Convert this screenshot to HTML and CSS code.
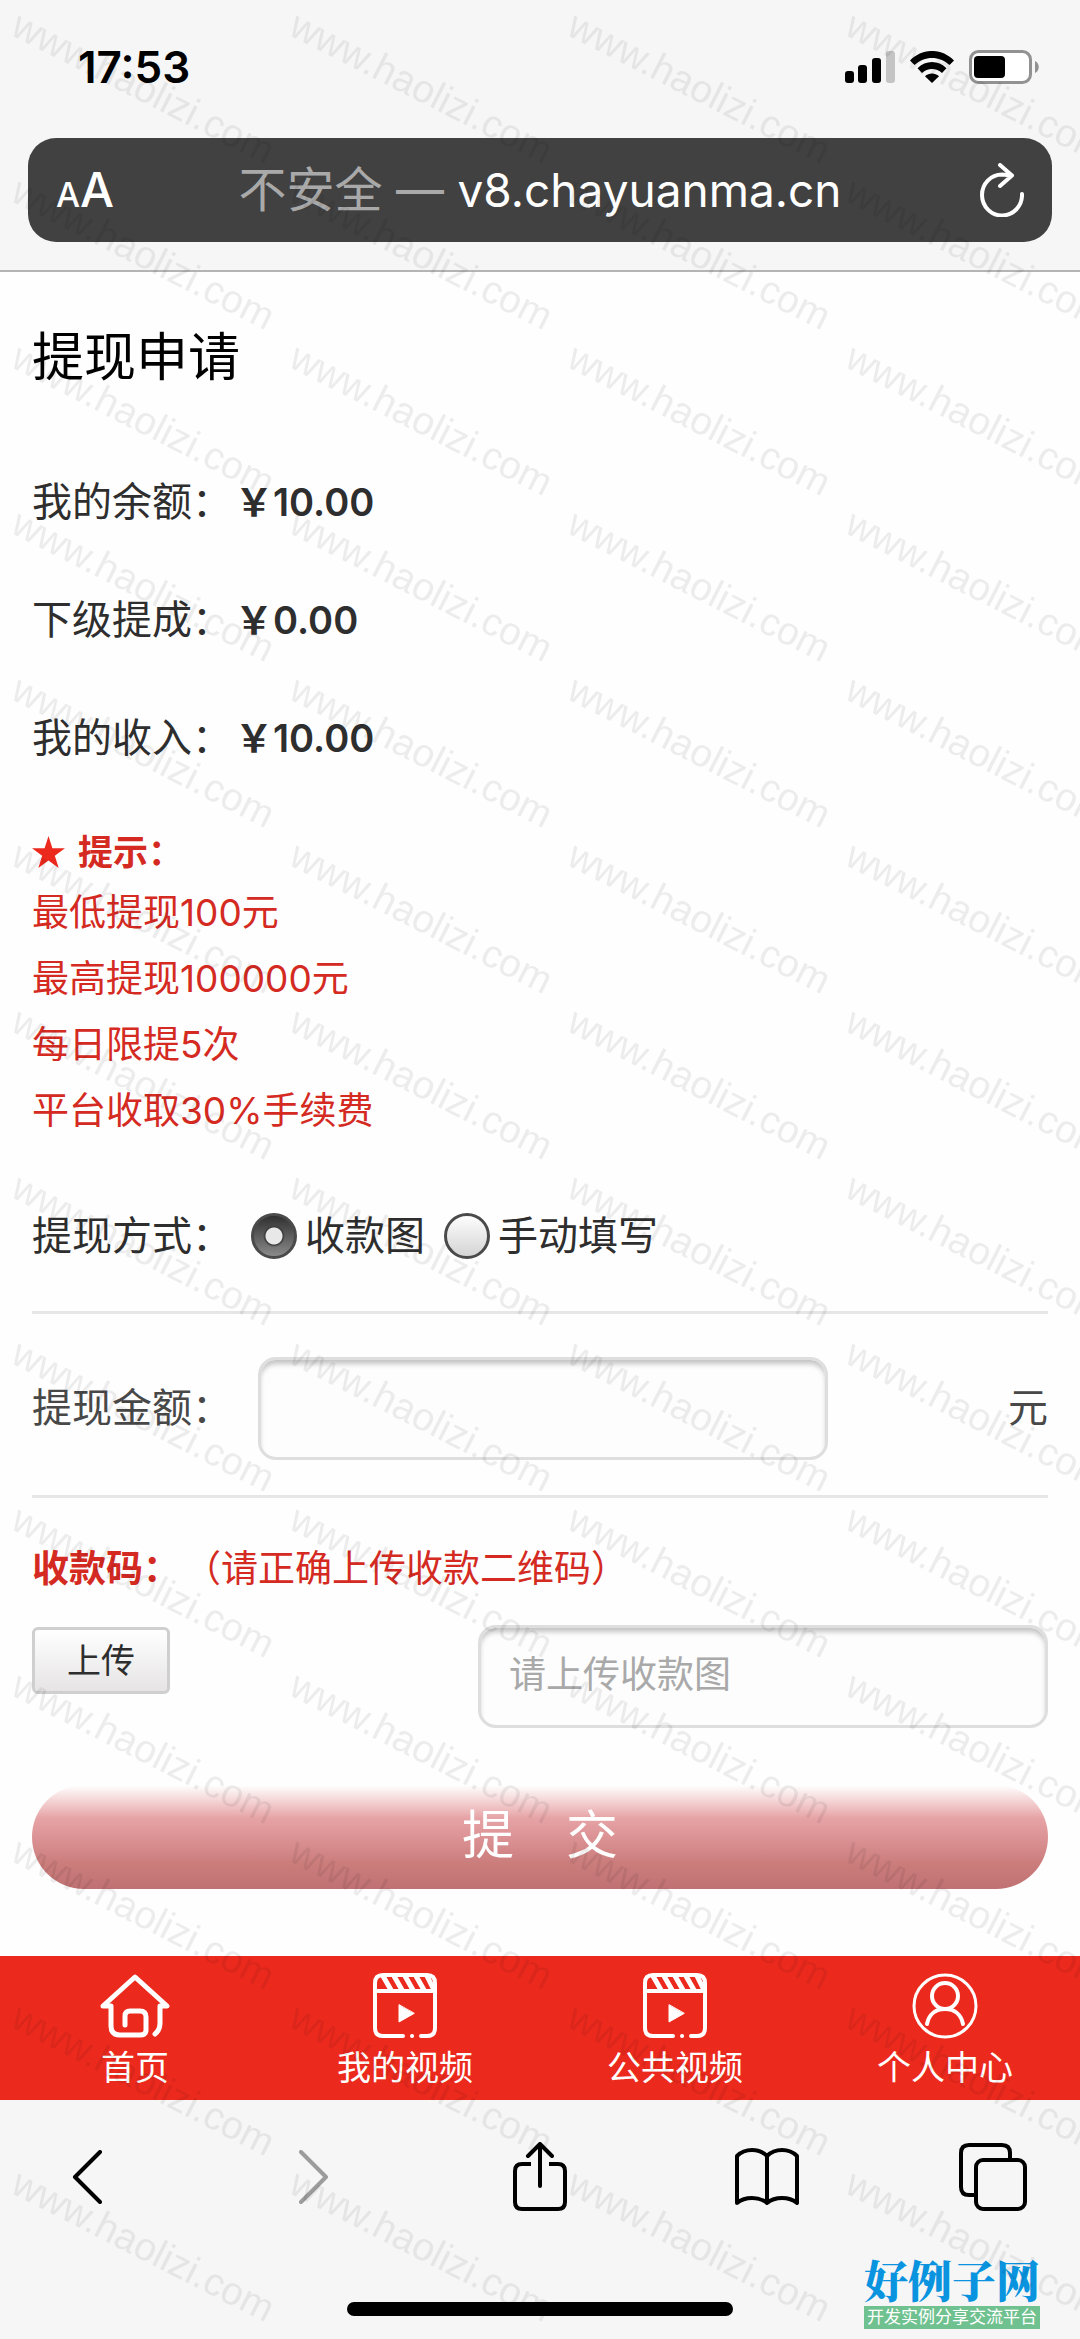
FILE: index.html
```html
<!DOCTYPE html>
<html lang="zh-CN">
<head>
<meta charset="utf-8">
<meta name="viewport" content="width=device-width, initial-scale=1">
<title>提现申请</title>
<link rel="stylesheet" href="styles.css">
</head>
<body>
<header class="browser-top">
  <div class="status">
    <time class="clock">17:53</time>
    <div class="status-icons">
      <svg width="50" height="32" viewBox="0 0 50 32" aria-hidden="true">
        <rect x="0" y="20" width="9" height="12" rx="3"/>
        <rect x="13" y="14" width="9" height="18" rx="3"/>
        <rect x="27" y="7" width="9" height="25" rx="3"/>
        <rect x="41" y="0" width="9" height="32" rx="3" fill="#c4c4c4"/>
      </svg>
      <svg width="44" height="32" viewBox="0 0 44 32" aria-hidden="true">
        <path d="M0 9.500C12.500-3.200 31.500-3.200 44 9.500L39.500 14C29.500 4.500 14.500 4.500 4.500 14Z"/>
        <path d="M7.500 17.200C15.500 9 28.500 9 36.500 17.200L32 22C26.500 16.500 17.500 16.500 12 22Z"/>
        <path d="M15 25.200C19 21.500 25 21.500 29 25.200L22 32Z"/>
      </svg>
      <svg width="70" height="34" viewBox="0 0 70 34" aria-hidden="true">
        <rect x="1.500" y="1.500" width="60" height="31" rx="8" fill="#fff" stroke="#929292" stroke-width="3"/>
        <rect x="5" y="6" width="31" height="22" rx="4"/>
        <path d="M66 11C71 13 71 21 66 23Z" fill="#929292"/>
      </svg>
    </div>
  </div>
  <div class="address">
    <button class="text-size" aria-label="文字大小"><span class="small-a">A</span><span>A</span></button>
    <p class="url"><span class="insecure">不安全 — </span><span class="host">v8.chayuanma.cn</span></p>
    <button class="reload" aria-label="重新加载">
      <svg width="44" height="54" viewBox="0 0 44 54" fill="none" stroke="#fff" stroke-width="4" stroke-linecap="round" stroke-linejoin="round" aria-hidden="true">
        <path d="M42 31A20 20.500 0 1 1 22 11.500L32 12.500M20 2L32 12.500L20 23"/>
      </svg>
    </button>
  </div>
</header>

<main class="page">
  <h1 class="title">提现申请</h1>
  <dl class="balances">
    <div class="balance"><dt>我的余额：</dt><dd>￥10.00</dd></div>
    <div class="balance"><dt>下级提成：</dt><dd>￥0.00</dd></div>
    <div class="balance"><dt>我的收入：</dt><dd>￥10.00</dd></div>
  </dl>

  <section class="tips">
    <h2 class="tips-title">
      <svg width="33" height="32" viewBox="0 0 33 32" fill="#ec291d" aria-hidden="true"><path d="M16.500 0L20.400 12.200H33L22.800 19.700L26.700 32L16.500 24.400L6.300 32L10.200 19.700L0 12.200H12.600Z"/></svg>
      提示：
    </h2>
    <ul class="tips-list">
      <li>最低提现100元</li>
      <li>最高提现100000元</li>
      <li>每日限提5次</li>
      <li>平台收取30%手续费</li>
    </ul>
  </section>

  <form class="form">
    <div class="field method" role="radiogroup" aria-labelledby="method-label">
      <span class="label" id="method-label">提现方式：</span>
      <label class="choice"><input class="radio" type="radio" name="method" checked>收款图</label>
      <label class="choice"><input class="radio" type="radio" name="method">手动填写</label>
    </div>
    <div class="field amount">
      <label class="label" for="amount">提现金额：</label>
      <input class="text-input" id="amount" type="text" inputmode="decimal">
      <span class="unit">元</span>
    </div>
    <p class="code-note"><label for="code"><strong class="code-name">收款码：</strong>（请正确上传收款二维码）</label></p>
    <div class="upload-row">
      <button class="upload" type="button">上传</button>
      <input class="text-input" id="code" type="text" placeholder="请上传收款图">
    </div>
    <button class="submit" type="submit">提　交</button>
  </form>
</main>

<nav class="tabs">
  <a class="tab" href="#home">
    <svg width="72" height="66" viewBox="0 0 72 66" fill="none" stroke="#fff" stroke-width="5" stroke-linecap="round" stroke-linejoin="round" aria-hidden="true">
      <path d="M26 52V43Q26 38 31 38H41Q47 38 47 44V57Q47 62 41 62H21Q12 62 12 53V33L4 33L36 4L68 33L61 33V50Q61 57 56 61"/>
    </svg>
    首页
  </a>
  <a class="tab" href="#mine">
    <svg width="64" height="66" viewBox="0 0 64 66" fill="none" stroke="#fff" stroke-width="4" stroke-linecap="round" aria-hidden="true">
      <path d="M30 63H10Q2 63 2 55V10Q2 2 10 2H54Q62 2 62 10V55Q62 63 54 63H48M39 63H39.100M2 18H62"/>
      <path d="M10 3L18 17M21 3L29 17M32 3L40 17M43 3L51 17M54 3L60 15" stroke-width="5"/>
      <path d="M26 32V49L41 40.500Z" fill="#fff" stroke-width="1"/>
    </svg>
    我的视频
  </a>
  <a class="tab" href="#public">
    <svg width="64" height="66" viewBox="0 0 64 66" fill="none" stroke="#fff" stroke-width="4" stroke-linecap="round" aria-hidden="true">
      <path d="M30 63H10Q2 63 2 55V10Q2 2 10 2H54Q62 2 62 10V55Q62 63 54 63H48M39 63H39.100M2 18H62"/>
      <path d="M10 3L18 17M21 3L29 17M32 3L40 17M43 3L51 17M54 3L60 15" stroke-width="5"/>
      <path d="M26 32V49L41 40.500Z" fill="#fff" stroke-width="1"/>
    </svg>
    公共视频
  </a>
  <a class="tab" href="#me">
    <svg width="66" height="66" viewBox="0 0 66 66" fill="none" stroke="#fff" stroke-width="3" stroke-linecap="round" aria-hidden="true">
      <circle cx="33" cy="33" r="31"/>
      <circle cx="33" cy="23" r="13" stroke-width="4"/>
      <path d="M15 51C17 41 24 36 33 36S49 41 51 51" stroke-width="4"/>
    </svg>
    个人中心
  </a>
</nav>

<footer class="browser-bottom">
  <div class="toolbar">
    <button class="tool" aria-label="后退"><svg width="30" height="54" viewBox="0 0 30 54" fill="none" stroke="#000" stroke-width="4" stroke-linecap="round" stroke-linejoin="round"><path d="M28 2L3 27L28 52"/></svg></button>
    <button class="tool" aria-label="前进"><svg width="30" height="54" viewBox="0 0 30 54" fill="none" stroke="#9c9c9c" stroke-width="4" stroke-linecap="round" stroke-linejoin="round"><path d="M2 2L27 27L2 52"/></svg></button>
    <button class="tool" aria-label="分享"><svg width="54" height="70" viewBox="0 0 54 70" fill="none" stroke="#000" stroke-width="4" stroke-linejoin="round"><path d="M18 22H9Q2 22 2 29V60Q2 67 9 67H45Q52 67 52 60V29Q52 22 45 22H36"/><path d="M27 44V2M15 14L27 2L39 14" stroke-linecap="round"/></svg></button>
    <button class="tool" aria-label="书签"><svg width="64" height="58" viewBox="0 0 64 58" fill="none" stroke="#000" stroke-width="4" stroke-linecap="round" stroke-linejoin="round"><path d="M32 8V55M32 8Q26 2 17 2T2 8V55Q8 50 17 50T32 55Q38 50 47 50T62 55V8Q56 2 47 2T32 8"/></svg></button>
    <button class="tool" aria-label="标签页"><svg width="68" height="68" viewBox="0 0 68 68" fill="none" stroke="#000" stroke-width="4"><path d="M16 52H10Q2 52 2 44V10Q2 2 10 2H43Q51 2 51 10V16"/><rect x="17" y="17" width="49" height="49" rx="7"/></svg></button>
  </div>
  <div class="home-bar"></div>
  <div class="brand">
    <strong class="brand-name">好例子网</strong>
    <span class="brand-line">开发实例分享交流平台</span>
  </div>
</footer>

<svg class="watermark" aria-hidden="true">
  <defs>
    <pattern id="mark" width="278" height="166" patternUnits="userSpaceOnUse">
      <text class="watermark-text" transform="translate(9 34) rotate(27)">www.haolizi.com</text>
    </pattern>
  </defs>
  <rect width="100%" height="100%" fill="url(#mark)"/>
</svg>
</body>
</html>
```
FILE: styles.css
```css
*, *::before, *::after { box-sizing: border-box; }

body {
  position: relative;
  margin: 0;
  background: #fefefe;
  color: #2e2e2e;
  font-family: Inter, "Noto Sans CJK SC", sans-serif;
  font-size: 40px;
  line-height: 60px;
  text-spacing-trim: space-all;
}

button, input { font: inherit; color: inherit; }
button { padding: 0; border: 0; background: none; cursor: pointer; }
svg { display: block; flex: none; }
h1, h2, p, dl, dd, ul { margin: 0; padding: 0; }

/* Browser header */
.browser-top {
  display: flex;
  flex-direction: column;
  padding: 0 28px 28px;
  background: #f6f6f6;
  border-bottom: 2px solid #b4b4b4;
}
.status {
  display: flex;
  align-items: center;
  justify-content: space-between;
  height: 138px;
  padding: 0 13px 4px 50px;
  color: #000;
}
.clock { font-size: 44px; font-weight: 600; }
.status-icons { display: flex; align-items: center; gap: 15px; }
.address {
  display: grid;
  grid-template-columns: 1fr auto 1fr;
  align-items: center;
  height: 104px;
  padding: 0 28px;
  border-radius: 28px;
  background: #414141;
  color: #fff;
  font-size: 48px;
}
.text-size { display: flex; align-items: baseline; padding-top: 4px; font-weight: 500; }
.small-a { font-size: 34px; }
.reload { justify-self: end; }
.insecure { color: #a9a9a9; }
.host { font-size: 46px; }

/* Page */
.page { padding: 50px 32px 67px; }
.title { color: #000; font-size: 52px; font-weight: 400; line-height: 72px; }
.balances { padding-top: 49px; }
.balance { display: flex; align-items: center; gap: 3px; height: 118px; }
.balance dd { font-size: 38px; font-weight: 600; }

.tips { padding: 29px 0 28px; color: #d42a22; font-size: 37px; line-height: 66px; }
.tips-title {
  display: flex;
  align-items: center;
  gap: 13px;
  font-size: 35px;
  line-height: 52px;
}
.tips-list { padding-top: 2px; list-style: none; }

.field { display: flex; align-items: center; border-bottom: 3px solid #e6e6e6; }
.label { flex: none; white-space: nowrap; }
.method { gap: 19px; height: 142px; padding-bottom: 12px; }
.choice { display: flex; align-items: center; gap: 8px; white-space: nowrap; }
.radio {
  appearance: none;
  width: 46px;
  height: 46px;
  margin: 0;
  border: 3px solid #4a4a4a;
  border-radius: 50%;
  background: linear-gradient(#fdfdfd, #d4d4d4);
}
.radio:checked {
  background:
    radial-gradient(circle, #e8e8e8 8px, #3a3a3a 9px, transparent 11px),
    linear-gradient(#303030, #8a8a8a);
}

.amount { gap: 26px; height: 184px; padding-top: 7px; color: #484848; }
.unit { margin-left: auto; }
.text-input {
  width: 570px;
  height: 103px;
  padding: 0 28px 4px;
  border: 3px solid #dedede;
  border-radius: 18px;
  background: #fdfdfd;
  box-shadow: inset 0 5px 5px -1px #c4c4c4;
  font-size: 37px;
}
.text-input::placeholder { color: #a9a9a9; opacity: 1; }

.code-note { padding: 41px 0 26px; color: #d42a22; font-size: 37px; }
.code-name { margin-right: 4px; }
.upload-row { display: flex; align-items: flex-start; justify-content: space-between; }
.upload {
  width: 138px;
  height: 67px;
  margin-top: 2px;
  border: 3px solid #cfcfcf;
  border-radius: 6px;
  background: linear-gradient(#fff, #e6e4e5);
  font-size: 34px;
}
.submit {
  width: 100%;
  height: 104px;
  margin-top: 57px;
  padding-bottom: 3px;
  border-radius: 52px;
  background: linear-gradient(#fff 0%, #f3cfd0 17%, #e6a3a6 32%, #dc9395 50%, #cb7d7c 75%, #c07072 100%);
  color: #fff;
  font-size: 52px;
}

/* Site navigation */
.tabs { display: flex; height: 144px; background: #ec291d; }
.tab {
  display: flex;
  flex: 1;
  flex-direction: column;
  align-items: center;
  gap: 3px;
  padding-top: 17px;
  color: #fff;
  font-size: 34px;
  line-height: 52px;
  text-decoration: none;
}

/* Browser footer */
.browser-bottom {
  position: relative;
  display: flex;
  flex-direction: column;
  align-items: center;
  height: 239px;
  padding-bottom: 23px;
  background: #f6f6f6;
}
.toolbar {
  display: flex;
  align-items: center;
  justify-content: space-between;
  width: 100%;
  height: 154px;
  padding: 0 53px;
}
.tool { display: flex; align-items: center; justify-content: center; width: 68px; }
.home-bar { width: 386px; height: 14px; margin-top: auto; border-radius: 7px; background: #000; }
.brand {
  position: absolute;
  right: 40px;
  bottom: 10px;
  display: flex;
  flex-direction: column;
  gap: 5px;
  width: 176px;
  text-align: center;
}
.brand-name {
  color: #0a94e0;
  font-family: "Noto Serif CJK SC", "Noto Sans CJK SC", serif;
  font-size: 44px;
  font-weight: 900;
  line-height: 44px;
}
.brand-line {
  background: #6fc190;
  color: #fff;
  font-size: 17px;
  line-height: 23px;
}

.watermark {
  position: absolute;
  inset: 0;
  width: 100%;
  height: 100%;
  pointer-events: none;
}
.watermark-text { font: 39px "Liberation Sans", sans-serif; fill: #000; fill-opacity: 0.07; }
```
